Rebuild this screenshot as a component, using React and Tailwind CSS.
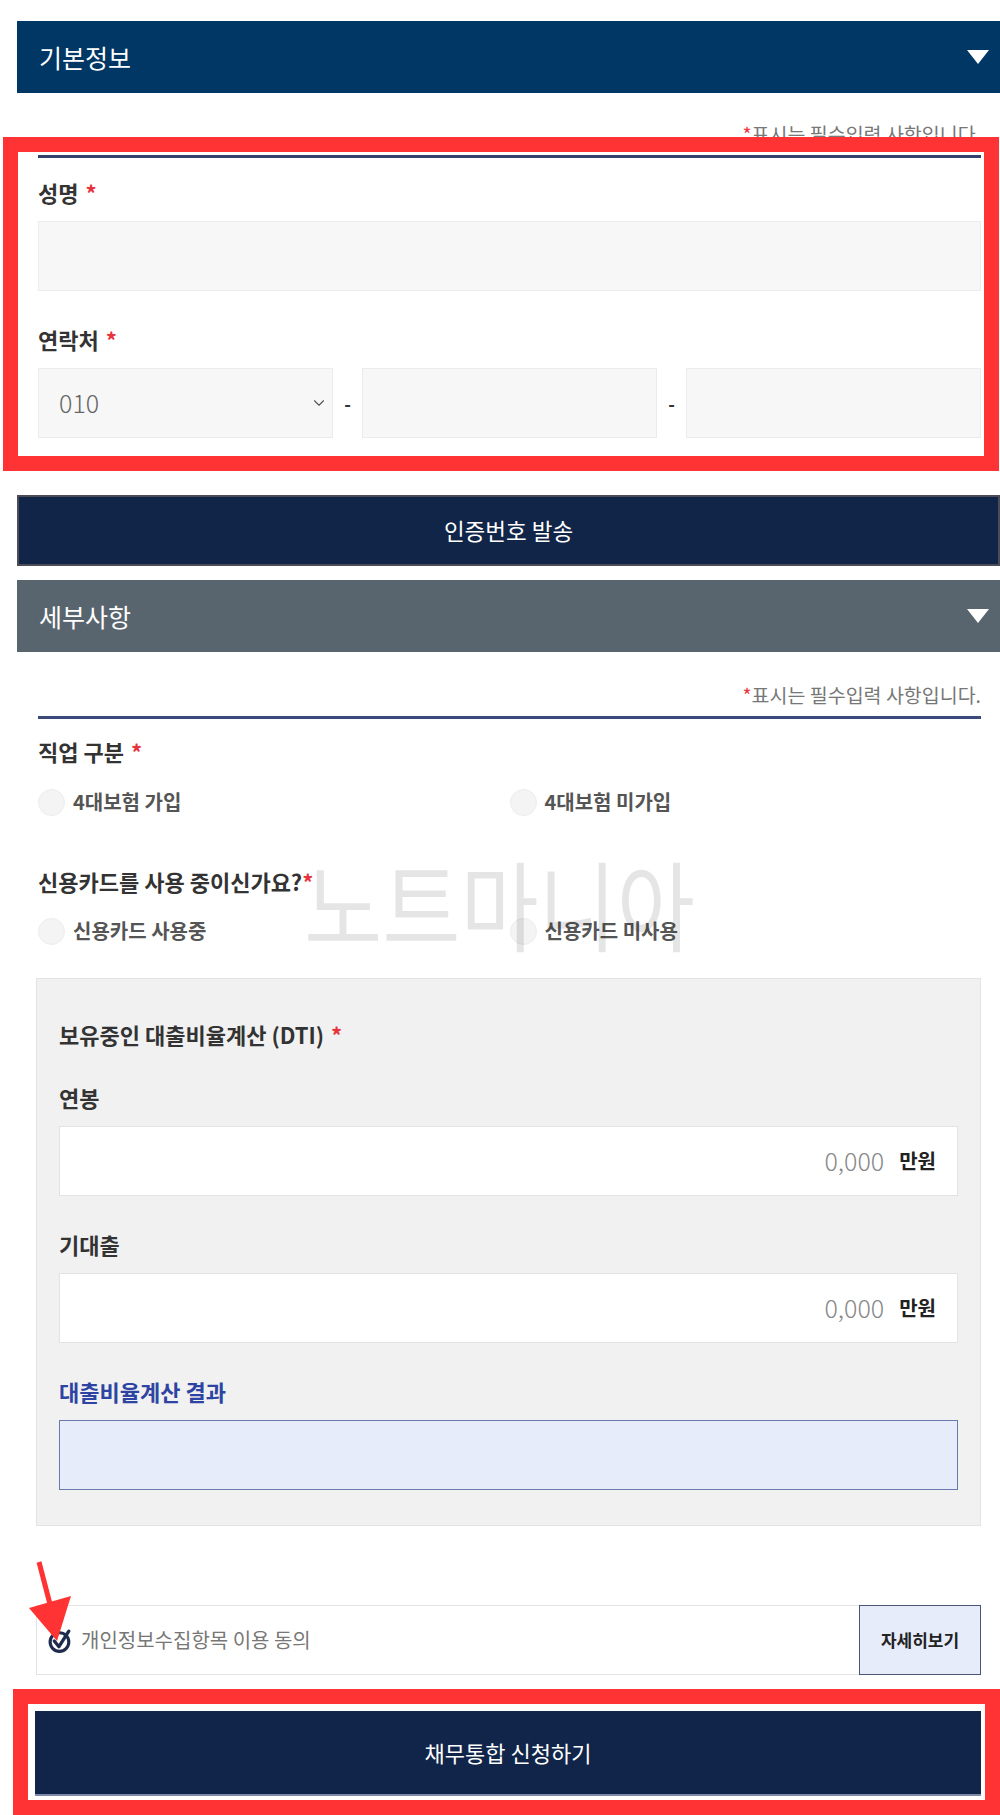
import { ChevronDown } from "lucide-react";

const FONT = "font-['Noto_Sans_CJK_KR','Noto_Sans',sans-serif]";

function SectionHeader({ title, tone }) {
  return (
    <div className={`h-[72px] flex items-center justify-between pl-[22px] pr-[10px] ${tone}`}>
      <span className="text-[25px] text-white leading-none">{title}</span>
      <svg width="24" height="16" viewBox="0 0 24 16">
        <polygon points="1,1 23,1 12,15" fill="#fff" />
      </svg>
    </div>
  );
}

function Notice() {
  return (
    <div className="h-[28px] leading-[28px] text-right text-[19.5px] text-[#777]">
      <span className="text-[#e8323c]">*</span>표시는 필수입력 사항입니다.
    </div>
  );
}

function Label({ children, required, tight, className = "" }) {
  return (
    <div className={`h-[30px] leading-[30px] text-[22px] font-bold text-[#333] ${className}`}>
      {children}
      {required && <span className={`text-[#e8323c] ${tight ? "" : "ml-[7px]"}`}>*</span>}
    </div>
  );
}

function Radio({ label }) {
  return (
    <label className="flex items-center h-[30px] gap-[8px]">
      <span className="w-[27px] h-[27px] rounded-full bg-[#f4f4f4] border border-[#ececec]" />
      <span className="text-[20px] font-bold text-[#555]">{label}</span>
    </label>
  );
}

function MoneyInput() {
  return (
    <div className="h-[70px] bg-white border border-[#e3e3e3] flex items-center justify-end pr-[21px] gap-[15px]">
      <span className="text-[25px] font-light text-[#888]">0,000</span>
      <span className="text-[20px] font-bold text-[#222]">만원</span>
    </div>
  );
}

function CheckCircle() {
  return (
    <svg width="25" height="27" viewBox="0 0 24 26">
      <circle cx="11" cy="14.5" r="9" fill="none" stroke="#1f2b4d" strokeWidth="3" />
      <path d="M6 13.5 L10.5 19 L20 4" fill="none" stroke="#1f2b4d" strokeWidth="3.2" strokeLinecap="round" strokeLinejoin="round" />
    </svg>
  );
}

export default function App() {
  return (
    <div className={`relative w-[1000px] h-[1815px] overflow-hidden bg-white ${FONT}`}>
      <div className="pt-[21px] pl-[17px]">
        <SectionHeader title="기본정보" tone="bg-[#003764]" />

        <div className="pl-[21px] pr-[19px]">
          <div className="mt-[27px]">
            <Notice />
          </div>
          <div className="mt-[7px] h-[3px] bg-[#33416c]" />

          <Label required className="mt-[19px]">성명</Label>
          <div className="mt-[14px] h-[70px] bg-[#f7f7f7] border border-[#ececec]" />

          <Label required className="mt-[33px]">연락처</Label>
          <div className="mt-[14px] flex items-center">
            <div className="w-[295px] h-[70px] bg-[#f7f7f7] border border-[#ececec] flex items-center justify-between pl-[20px] pr-[4px]">
              <span className="text-[25px] font-light text-[#666]">010</span>
              <ChevronDown size={18} strokeWidth={1.5} color="#555" />
            </div>
            <span className="w-[29px] text-center text-[18px] font-bold text-[#333]">-</span>
            <div className="w-[295px] h-[70px] bg-[#f7f7f7] border border-[#ececec]" />
            <span className="w-[29px] text-center text-[18px] font-bold text-[#333]">-</span>
            <div className="w-[295px] h-[70px] bg-[#f7f7f7] border border-[#ececec]" />
          </div>
        </div>

        <button className="mt-[57px] w-full h-[71px] bg-[#112548] border-2 border-[#4a4d55] text-white text-[22.5px]">
          인증번호 발송
        </button>

        <div className="mt-[14px]">
          <SectionHeader title="세부사항" tone="bg-[#59656e]" />
        </div>

        <div className="pl-[21px] pr-[19px]">
          <div className="mt-[29px]">
            <Notice />
          </div>
          <div className="mt-[7px] h-[3px] bg-[#3b4a7a]" />

          <Label required className="mt-[17px]">직업 구분</Label>
          <div className="mt-[21px] grid grid-cols-2">
            <Radio label="4대보험 가입" />
            <Radio label="4대보험 미가입" />
          </div>

          <Label required tight className="mt-[49px]">신용카드를 사용 중이신가요?</Label>
          <div className="mt-[20px] grid grid-cols-2">
            <Radio label="신용카드 사용중" />
            <Radio label="신용카드 미사용" />
          </div>

          <div className="mt-[32px] -ml-[2px] bg-[#f1f1f1] border border-[#e3e3e3] pt-[40px] pb-[35px] px-[22px]">
            <Label required>보유중인 대출비율계산 (DTI)</Label>

            <Label className="mt-[33px]">연봉</Label>
            <div className="mt-[14px]">
              <MoneyInput />
            </div>

            <Label className="mt-[33px]">기대출</Label>
            <div className="mt-[14px]">
              <MoneyInput />
            </div>

            <div className="mt-[33px] h-[30px] leading-[30px] text-[22px] font-bold text-[#2d44a3]">
              대출비율계산 결과
            </div>
            <div className="mt-[14px] h-[70px] bg-[#e6ecfa] border-[1.5px] border-[#6a79ad]" />
          </div>

          <div className="mt-[79px] -ml-[2px] h-[70px] flex border border-[#e4e4e4]">
            <div className="flex-1 flex items-center pl-[11px] gap-[8px]">
              <CheckCircle />
              <span className="text-[20px] text-[#777]">개인정보수집항목 이용 동의</span>
            </div>
            <button className="w-[122px] -my-px -mr-px bg-[#e7ecfb] border border-[#4a5578] text-[17px] font-bold text-[#222]">
              자세히보기
            </button>
          </div>

          <button className="mt-[36px] -ml-[3px] w-[946px] h-[85px] bg-[#11254a] border-b-2 border-[#7d8aa8] text-white text-[22px]">
            채무통합 신청하기
          </button>
        </div>
      </div>

      {/* watermark */}
      <div className="absolute left-[304px] top-[852px] origin-top scale-y-[1.15] text-[85px] leading-none text-black/10 pointer-events-none select-none">
        노트마니아
      </div>

      {/* red annotation boxes */}
      <div className="absolute left-[3px] top-[137px] w-[996px] h-[334px] border-[15px] border-[#ff3333] pointer-events-none" />
      <div className="absolute left-[13px] top-[1689px] w-[987px] h-[126px] border-[15px] border-[#ff3333] pointer-events-none" />

      {/* red arrow */}
      <svg className="absolute left-0 top-[1550px] pointer-events-none" width="90" height="100" viewBox="0 1550 90 100">
        <line x1="39" y1="1562" x2="51" y2="1608" stroke="#ff3333" strokeWidth="5" />
        <polygon points="29,1608 71,1596 57,1641" fill="#ff3333" />
      </svg>
    </div>
  );
}
